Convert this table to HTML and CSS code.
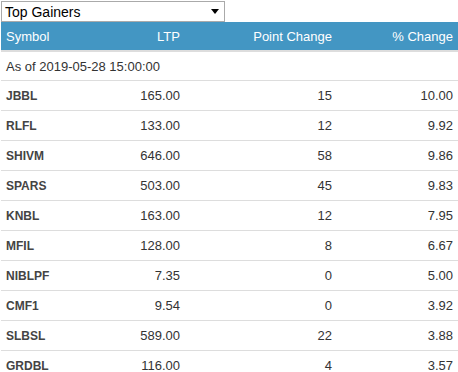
FILE: index.html
```html
<!DOCTYPE html>
<html>
<head>
<meta charset="utf-8">
<link rel="stylesheet" href="styles.css">
</head>
<body>
<div class="wrap">
  <div class="picker">
    <span class="picker-label">Top Gainers</span>
    <span class="caret"></span>
  </div>
  <table class="movers">
    <thead>
      <tr><th class="l c1">Symbol</th><th class="r c2">LTP</th><th class="r c3">Point Change</th><th class="r c4">% Change</th></tr>
    </thead>
    <tbody>
      <tr class="asof"><td colspan="4">As of 2019-05-28 15:00:00</td></tr>
      <tr><td class="sym">JBBL</td><td class="r">165.00</td><td class="r">15</td><td class="r">10.00</td></tr>
      <tr><td class="sym">RLFL</td><td class="r">133.00</td><td class="r">12</td><td class="r">9.92</td></tr>
      <tr><td class="sym">SHIVM</td><td class="r">646.00</td><td class="r">58</td><td class="r">9.86</td></tr>
      <tr><td class="sym">SPARS</td><td class="r">503.00</td><td class="r">45</td><td class="r">9.83</td></tr>
      <tr><td class="sym">KNBL</td><td class="r">163.00</td><td class="r">12</td><td class="r">7.95</td></tr>
      <tr><td class="sym">MFIL</td><td class="r">128.00</td><td class="r">8</td><td class="r">6.67</td></tr>
      <tr><td class="sym">NIBLPF</td><td class="r">7.35</td><td class="r">0</td><td class="r">5.00</td></tr>
      <tr><td class="sym">CMF1</td><td class="r">9.54</td><td class="r">0</td><td class="r">3.92</td></tr>
      <tr><td class="sym">SLBSL</td><td class="r">589.00</td><td class="r">22</td><td class="r">3.88</td></tr>
      <tr><td class="sym">GRDBL</td><td class="r">116.00</td><td class="r">4</td><td class="r">3.57</td></tr>
    </tbody>
  </table>
</div>
</body>
</html>
```
FILE: styles.css
```css
html, body { margin: 0; padding: 0; background: #fff; }
body { font-family: "Liberation Sans", Arial, sans-serif; font-size: 13px; color: #333; }
.wrap { padding: 1px 0 0 1px; }
.picker {
  box-sizing: border-box;
  width: 224px; height: 21px;
  border: 1px solid #aaa;
  display: flex; align-items: center; justify-content: space-between;
  padding: 0 5px 0 3px;
  font-size: 14px; color: #000;
}
.caret { width: 0; height: 0; border-left: 4px solid transparent; border-right: 4px solid transparent; border-top: 5px solid #000; }
.movers { width: 457px; border-collapse: collapse; border-spacing: 0; }
.movers th { background: #4396c3; color: #fff; font-weight: normal; height: 28px; padding: 0 5px; border-bottom: 2px solid #ddd; }
.movers td { height: 29px; padding: 0 5px; border-top: 1px solid #ddd; }
.l { text-align: left; }
.r { text-align: right; }
.c1 { width: 83px; }
.c2 { width: 81px; }
.c3 { width: 142px; }
.sym { font-weight: bold; font-size: 12px; color: #444; }
.asof td { border-top: none; height: 28px; }
```
